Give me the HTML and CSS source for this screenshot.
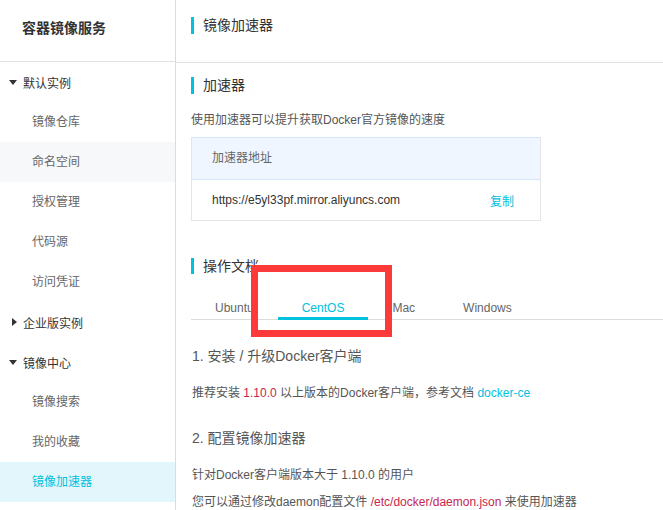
FILE: index.html
```html
<!doctype html>
<html lang="zh-CN">
<head>
  <meta charset="utf-8">
  <title>镜像加速器</title>
  <link rel="stylesheet" href="styles.css">
</head>
<body>
<div class="page">
  <div class="sidebar">
    <div class="side-head">容器镜像服务</div>
    <div class="group"><span class="arrow down"></span>默认实例</div>
    <div class="item">镜像仓库</div>
    <div class="item hover">命名空间</div>
    <div class="item">授权管理</div>
    <div class="item">代码源</div>
    <div class="item">访问凭证</div>
    <div class="group"><span class="arrow right"></span>企业版实例</div>
    <div class="group"><span class="arrow down"></span>镜像中心</div>
    <div class="item">镜像搜索</div>
    <div class="item">我的收藏</div>
    <div class="item active">镜像加速器</div>
  </div>

  <div class="main">
    <div class="main-head">
      <div class="title">镜像加速器</div>
    </div>
    <div class="content">
      <div class="title sec">加速器</div>
      <p class="desc">使用加速器可以提升获取Docker官方镜像的速度</p>
      <div class="addr">
        <div class="addr-head">加速器地址</div>
        <div class="addr-row">
          <span>https://e5yl33pf.mirror.aliyuncs.com</span>
          <a class="link">复制</a>
        </div>
      </div>

      <div class="title sec docs">操作文档</div>
      <div class="tabs">
        <div class="tab">Ubuntu</div>
        <div class="tab on">CentOS</div>
        <div class="tab">Mac</div>
        <div class="tab">Windows</div>
      </div>

      <h3 class="step">1. 安装 / 升级Docker客户端</h3>
      <p class="txt first">推荐安装 <span class="code">1.10.0</span> 以上版本的Docker客户端，参考文档 <a class="link">docker-ce</a></p>
      <h3 class="step">2. 配置镜像加速器</h3>
      <p class="txt first">针对Docker客户端版本大于 1.10.0 的用户</p>
      <p class="txt second">您可以通过修改daemon配置文件 <span class="code">/etc/docker/daemon.json</span> 来使用加速器</p>
    </div>
  </div>

  <!-- highlight frame round the CentOS tab -->
  <div class="mark"></div>
</div>
</body>
</html>
```

FILE: styles.css
```css
body {
    margin: 0;
    font-family: "Liberation Sans", "Noto Sans CJK SC", sans-serif;
    font-size: 12px;
    color: #555;
    background: #fff;
}

.page {
    position: relative;
    display: flex;
    height: 510px;
    overflow: hidden;
}

/* sidebar */
.sidebar {
    width: 175px;
    flex-shrink: 0;
    border-right: 1px solid #dcdcdc;
}
.side-head {
    height: 43px;
    padding: 18px 0 0 22px;
    line-height: 20px;
    font-size: 14px;
    font-weight: bold;
    color: #333;
    border-bottom: 1px solid #e2e2e2;
}
.group {
    display: flex;
    align-items: center;
    height: 40px;
    padding-left: 9px;
    color: #333;
}
.arrow {
    width: 8px;
    height: 8px;
    margin-right: 6px;
    display: flex;
    align-items: center;
    justify-content: center;
}
.arrow::before {
    content: "";
    border-style: solid;
    border-color: transparent;
}
.arrow.down::before {
    border-width: 5px 4px 0 4px;
    border-top-color: #333;
}
.arrow.right::before {
    border-width: 4px 0 4px 5px;
    border-left-color: #333;
    margin-left: 2px;
}
.item {
    height: 40px;
    line-height: 40px;
    padding-left: 32px;
    color: #666;
}
.item.hover {
    background: #f7f8fa;
}
.item.active {
    background: #e3f6fb;
    color: #00c1de;
}

/* main area */
.main {
    flex: 1;
    min-width: 0;
}
.main-head {
    height: 45px;
    padding: 17px 0 0 15px;
    border-bottom: 1px solid #e2e2e2;
}
.title {
    border-left: 3px solid #00c1de;
    padding-left: 9px;
    height: 17px;
    line-height: 17px;
    font-size: 14px;
    color: #333;
}
.content {
    padding-left: 15px;
}
.sec {
    margin-top: 14px;
}
.desc {
    margin: 17px 0 8px;
    line-height: 18px;
}

.addr {
    width: 348px;
    border: 1px solid #e5e5e5;
    border-top-color: #d3e6fb;
}
.addr-head {
    height: 41px;
    line-height: 41px;
    padding-left: 20px;
    background: #eff6ff;
    border-bottom: 1px solid #d3e6fb;
    color: #666;
}
.addr-row {
    height: 40px;
    display: flex;
    align-items: center;
    justify-content: space-between;
    padding: 0 26px 0 20px;
    color: #333;
}
.link {
    color: #00c1de;
    cursor: pointer;
}

.docs {
    margin-top: 37px;
    height: 16px;
}
.tabs {
    display: flex;
    margin-top: 25px;
    border-bottom: 1px solid #dcdcdc;
}
.tab {
    padding: 0 24px;
    line-height: 18px;
    border-bottom: 3px solid transparent;
    margin-bottom: -1px;
    color: #666;
}
.tab.on {
    color: #00c1de;
    border-bottom-color: #00c1de;
}

.step {
    margin: 26px 0 0 1px;
    font-size: 14px;
    font-weight: normal;
    line-height: 20px;
    color: #555;
}
.txt {
    margin: 0 0 0 1px;
    line-height: 18px;
}
.txt.first {
    margin-top: 18px;
}
.txt.second {
    margin-top: 9px;
}
.code {
    color: #c7254e;
}

.mark {
    position: absolute;
    left: 251px;
    top: 265px;
    width: 127px;
    height: 58px;
    border: 7px solid #fc3a3a;
}
```
